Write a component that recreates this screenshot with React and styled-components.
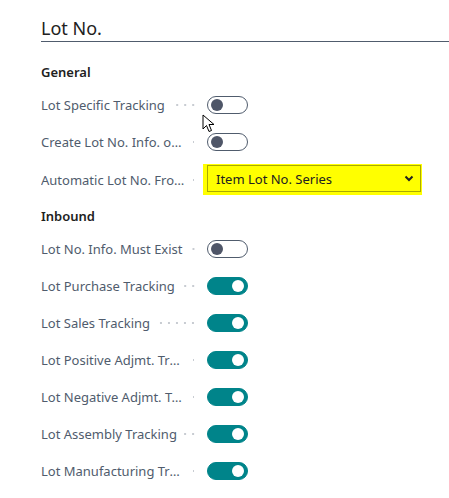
import React from 'react';
import styled, { createGlobalStyle } from 'styled-components';

const GlobalStyle = createGlobalStyle`
  body {
    margin: 0;
    background: #fff;
    font-family: "Noto Sans", "Open Sans", sans-serif;
  }
`;

const general = [
  { label: 'Lot Specific Tracking', type: 'toggle', on: false },
  { label: 'Create Lot No. Info. on posting', type: 'toggle', on: false },
  { label: 'Automatic Lot No. From Series', type: 'select', value: 'Item Lot No. Series' },
];

const inbound = [
  { label: 'Lot No. Info. Must Exist', on: false },
  { label: 'Lot Purchase Tracking', on: true },
  { label: 'Lot Sales Tracking', on: true },
  { label: 'Lot Positive Adjmt. Tracking', on: true },
  { label: 'Lot Negative Adjmt. Tracking', on: true },
  { label: 'Lot Assembly Tracking', on: true },
  { label: 'Lot Manufacturing Tracking', on: true },
];

const Field = ({ label, children, tall }) => (
  <Row tall={tall}>
    <LabelCell>
      <Label>{label}</Label>
      <Leader />
    </LabelCell>
    {children}
  </Row>
);

const App = () => (
  <Page>
    <GlobalStyle />
    <Title>Lot No.</Title>
    <Group>General</Group>
    {general.map((f) => (
      <Field key={f.label} label={f.label} tall={f.type === 'select'}>
        {f.type === 'select' ? (
          <Highlight>
            <Select>
              <span>{f.value}</span>
              <svg width="10" height="7" viewBox="0 0 10 7">
                <path d="M1.5 1.5 L5 5 L8.5 1.5" fill="none" stroke="#212121" strokeWidth="2" />
              </svg>
            </Select>
          </Highlight>
        ) : (
          <Toggle on={f.on}>
            <Knob on={f.on} />
          </Toggle>
        )}
      </Field>
    ))}
    <Group inbound>Inbound</Group>
    {inbound.map((f) => (
      <Field key={f.label} label={f.label}>
        <Toggle on={f.on}>
          <Knob on={f.on} />
        </Toggle>
      </Field>
    ))}
    <Cursor width="14" height="20" viewBox="0 0 14 20">
      <path d="M1 1 L1 15 L4.5 11.5 L7 17.5 L9.5 16.5 L7 10.5 L12 10.5 Z" fill="#fff" stroke="#000" strokeWidth="1" />
    </Cursor>
  </Page>
);

export default App;

const Page = styled.div`
  position: relative;
  padding-left: 41px;
  padding-bottom: 10px;
  overflow: hidden;
`;

const Title = styled.h1`
  margin: 16px 0 0;
  font-size: 18px;
  font-weight: 400;
  line-height: 24px;
  color: #212121;
  padding-bottom: 1px;
  border-bottom: 1px solid #505c6d;
`;

const Group = styled.div`
  margin-top: ${(p) => (p.inbound ? '7px' : '20px')};
  margin-bottom: 4px;
  font-size: 13px;
  font-weight: 600;
  line-height: 20px;
  color: #212121;
`;

const Row = styled.div`
  display: flex;
  align-items: center;
  height: ${(p) => (p.tall ? '39px' : '37px')};
`;

const LabelCell = styled.div`
  display: flex;
  align-items: center;
  width: 156px;
  flex-shrink: 0;
`;

const Label = styled.span`
  max-width: 145px;
  white-space: nowrap;
  overflow: hidden;
  text-overflow: ellipsis;
  font-size: 13px;
  color: #505c6d;
`;

const Leader = styled.span`
  flex: 1;
  height: 4px;
  margin-left: 7px;
  min-width: 4px;
  background-image: radial-gradient(circle, #c8ccd2 0.9px, transparent 1.3px);
  background-size: 8px 4px;
  background-position: right center;
  background-repeat: repeat-x;
`;

const Toggle = styled.span`
  box-sizing: border-box;
  position: relative;
  display: inline-flex;
  align-items: center;
  width: 41px;
  height: 18px;
  margin-left: 10px;
  border-radius: 9px;
  border: 1px solid ${(p) => (p.on ? '#00848a' : '#505c6d')};
  background: ${(p) => (p.on ? '#00848a' : '#fff')};
  justify-content: ${(p) => (p.on ? 'flex-end' : 'flex-start')};
  padding: 0 3px;
`;

const Knob = styled.span`
  width: 12px;
  height: 12px;
  border-radius: 50%;
  background: ${(p) => (p.on ? '#fff' : '#4f5668')};
`;

const Highlight = styled.div`
  margin-left: 6px;
  padding: 1px 1px 3px 4px;
  background: #ffff00;
`;

const Select = styled.div`
  box-sizing: border-box;
  display: flex;
  align-items: center;
  justify-content: space-between;
  width: 214px;
  height: 27px;
  padding: 0 6px 0 8px;
  border: 1px solid #aaaa00;
  font-size: 13px;
  color: #212121;
`;

const Cursor = styled.svg`
  position: absolute;
  left: 202px;
  top: 114px;
`;
